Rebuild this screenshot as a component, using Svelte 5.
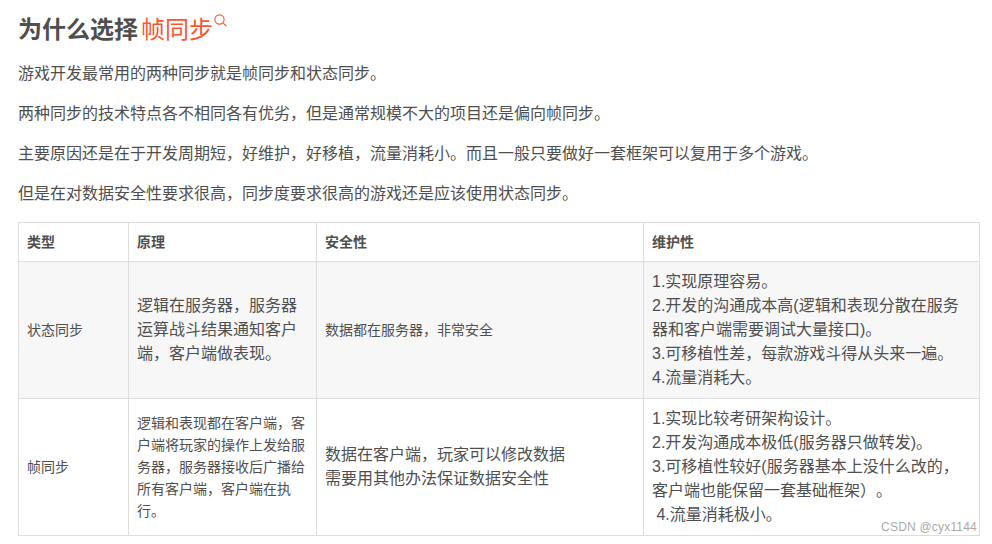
<script>
	const paragraphs = [
		'游戏开发最常用的两种同步就是帧同步和状态同步。',
		'两种同步的技术特点各不相同各有优劣，但是通常规模不大的项目还是偏向帧同步。',
		'主要原因还是在于开发周期短，好维护，好移植，流量消耗小。而且一般只要做好一套框架可以复用于多个游戏。',
		'但是在对数据安全性要求很高，同步度要求很高的游戏还是应该使用状态同步。'
	];
</script>

<div class="article">
	<h2>为什么选择<span class="keyword">帧同步<svg class="search" width="13" height="13" viewBox="0 0 13 13" aria-hidden="true">
				<circle cx="5.5" cy="5.5" r="4.6" />
				<path d="M8.8 8.8 12.4 12" />
			</svg></span></h2>

	{#each paragraphs as text}
		<p>{text}</p>
	{/each}

	<table>
		<colgroup>
			<col class="c1" />
			<col class="c2" />
			<col class="c3" />
			<col class="c4" />
		</colgroup>
		<thead>
			<tr>
				<th>类型</th>
				<th>原理</th>
				<th>安全性</th>
				<th>维护性</th>
			</tr>
		</thead>
		<tbody>
			<tr class="stripe">
				<td>状态同步</td>
				<td class="big">逻辑在服务器，服务器运算战斗结果通知客户端，客户端做表现。</td>
				<td>数据都在服务器，非常安全</td>
				<td class="big">
					1.实现原理容易。<br />
					2.开发的沟通成本高(逻辑和表现分散在服务器和客户端需要调试大量接口)。<br />
					3.可移植性差，每款游戏斗得从头来一遍。<br />
					4.流量消耗大。
				</td>
			</tr>
			<tr>
				<td>帧同步</td>
				<td>逻辑和表现都在客户端，客户端将玩家的操作上发给服务器，服务器接收后广播给所有客户端，客户端在执行。</td>
				<td class="big">数据在客户端，玩家可以修改数据<br />需要用其他办法保证数据安全性</td>
				<td class="big">
					1.实现比较考研架构设计。<br />
					2.开发沟通成本极低(服务器只做转发)。<br />
					3.可移植性较好(服务器基本上没什么改的，客户端也能保留一套基础框架）。<br />
					&nbsp;4.流量消耗极小。
				</td>
			</tr>
		</tbody>
	</table>

	<div class="watermark">CSDN @cyx1144</div>
</div>

<style>
	:global(body) {
		background: #fff;
	}

	.article {
		position: relative;
		height: 544px;
		overflow: hidden;
		padding: 14px 12px 0 18px;
		box-sizing: border-box;
		font-family: 'Liberation Sans', 'Noto Sans CJK SC', sans-serif;
		color: #4f4f4f;
		text-spacing-trim: space-all;
	}

	h2 {
		margin: 0 0 16px;
		font-size: 24px;
		line-height: 32px;
		font-weight: 700;
	}

	.keyword {
		position: relative;
		margin-left: 3px;
		color: #fc5531;
		font-weight: 400;
	}

	.search {
		position: absolute;
		top: -2px;
		right: -14px;
		fill: none;
		stroke: #fc5531;
		stroke-width: 1.1;
	}

	p {
		margin: 0 0 16px;
		font-size: 16px;
		line-height: 24px;
	}

	table {
		width: 962px;
		margin-top: 16px;
		border-collapse: collapse;
		table-layout: fixed;
		font-size: 14px;
		line-height: 22px;
	}

	.c1 {
		width: 110px;
	}

	.c2 {
		width: 188px;
	}

	.c3 {
		width: 327px;
	}

	th,
	td {
		padding: 8px;
		border: 1px solid #ddd;
		text-align: left;
		word-break: break-all;
	}

	th {
		font-weight: 700;
	}

	.stripe {
		background: #f7f7f7;
	}

	.big {
		font-size: 16px;
		line-height: 24px;
	}

	.watermark {
		position: absolute;
		right: 15px;
		top: 519px;
		font-size: 12px;
		line-height: 16px;
		color: #aaa;
		letter-spacing: 0.2px;
	}
</style>
